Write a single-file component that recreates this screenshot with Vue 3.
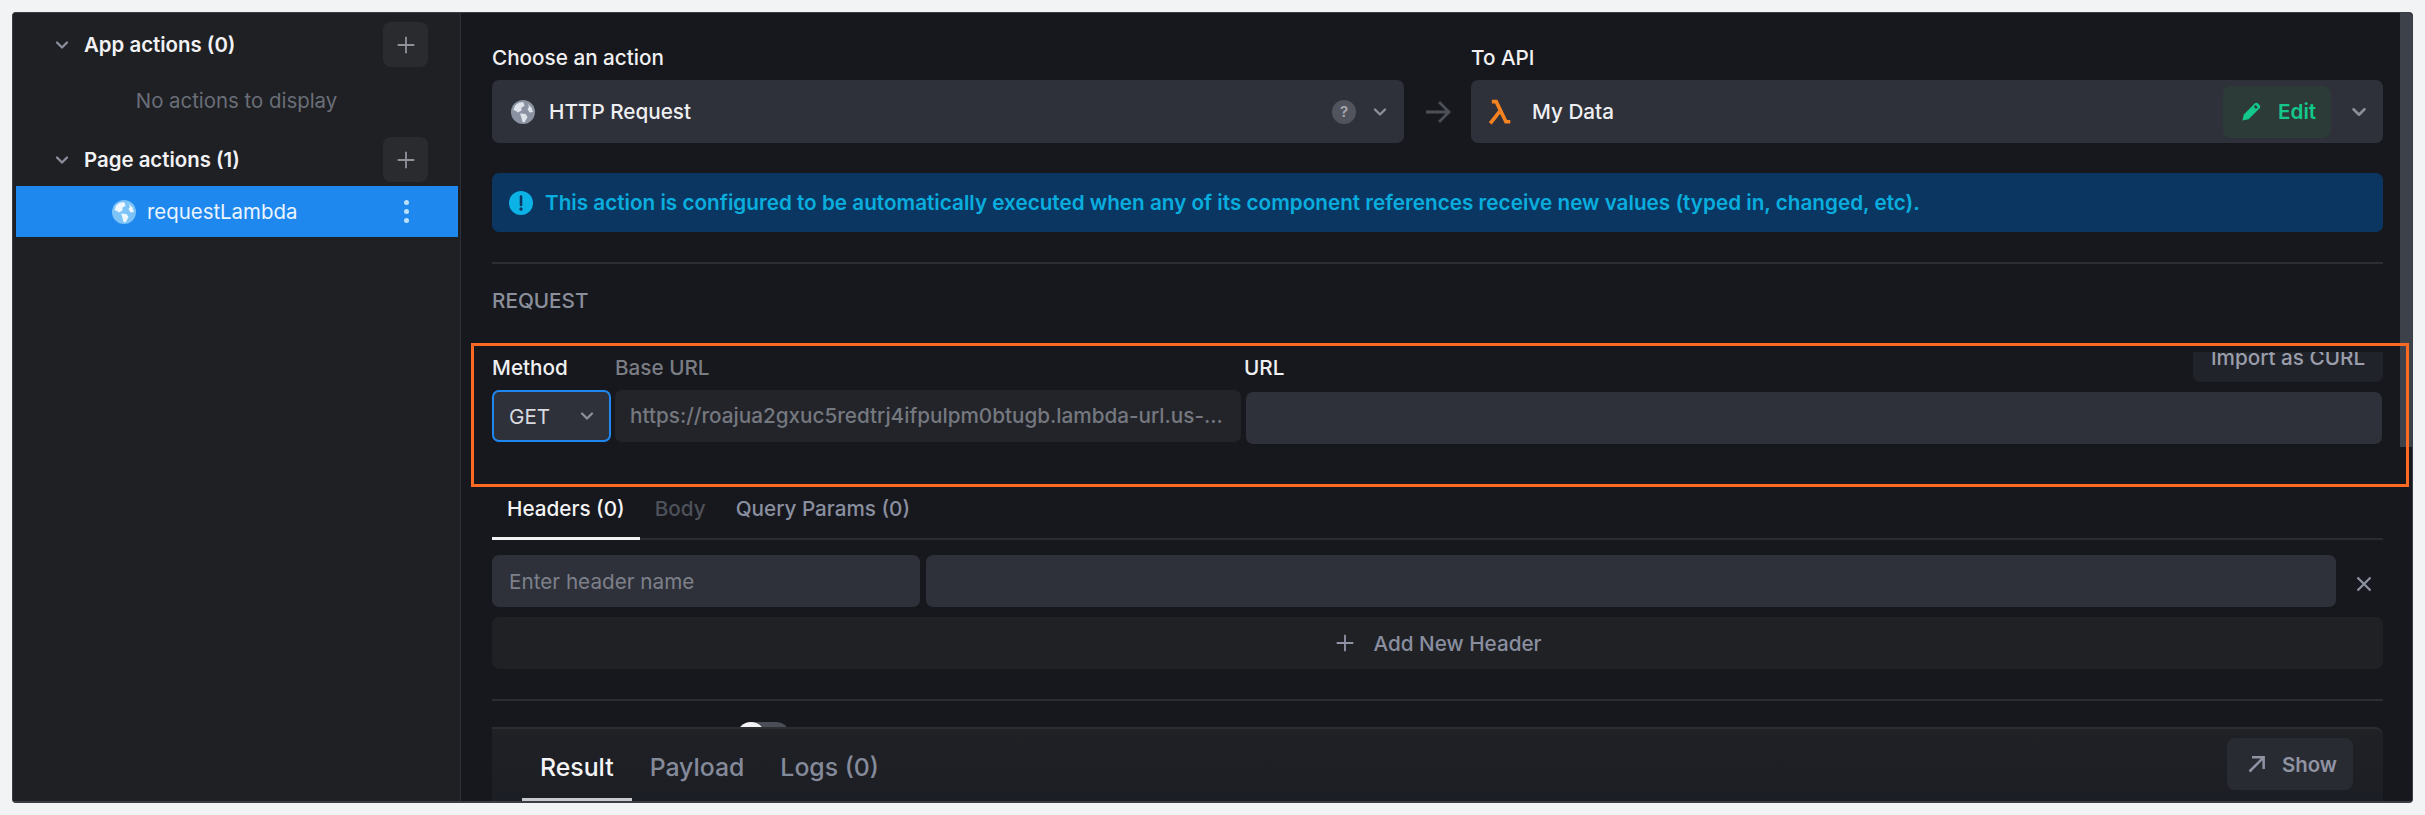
<script setup>
const globeLand = [
  'M4 5.5C7 2.5 10 1.5 12.5 2.5L13.5 6L10.5 7.5L10.5 10.5L7 12.5L5 11L2.5 10Z',
  'M9 13.5L14.5 14L16.5 17L13.5 22.5L11.5 22L10.5 18Z',
  'M17 4L20.5 7.5L22 12L18.5 12.5L16.5 9L18 7Z'
]
const sections = [
  { title: 'App actions (0)', empty: true },
  { title: 'Page actions (1)', empty: false }
]
const requestTabs = [
  { label: 'Headers (0)', state: 'active' },
  { label: 'Body', state: 'disabled' },
  { label: 'Query Params (0)', state: '' }
]
const resultTabs = ['Result', 'Payload', 'Logs (0)']
</script>

<template>
  <div class="frame">
    <aside class="sidebar">
      <section v-for="s in sections" :key="s.title" class="group">
        <header class="group-head">
          <svg class="chev side-chev" viewBox="0 0 24 24"><path d="M6 9l6 6 6-6" /></svg>
          <span class="group-title">{{ s.title }}</span>
          <button class="add-btn">
            <svg viewBox="0 0 24 24" class="plus"><path d="M12 2v20M2 12h20" /></svg>
          </button>
        </header>
        <p v-if="s.empty" class="empty">No actions to display</p>
        <div v-else class="action-row">
          <svg class="globe" viewBox="0 0 24 24">
            <circle cx="12" cy="12" r="12" fill="#7cc3f8" />
            <path v-for="d in globeLand" :key="d" :d="d" fill="#eef7ff" />
          </svg>
          <span class="action-name">requestLambda</span>
          <span class="dots"><i></i><i></i><i></i></span>
        </div>
      </section>
    </aside>

    <main class="main">
      <div class="top-row">
        <div class="pick">
          <label class="label">Choose an action</label>
          <div class="select">
            <svg class="globe" viewBox="0 0 24 24">
              <circle cx="12" cy="12" r="12" fill="#8b93a3" />
              <path v-for="d in globeLand" :key="d" :d="d" fill="#dfe3ea" />
            </svg>
            <span class="select-text">HTTP Request</span>
            <span class="help">?</span>
            <svg class="chev select-chev" viewBox="0 0 24 24"><path d="M6 9l6 6 6-6" /></svg>
          </div>
        </div>
        <div class="arrow-cell">
          <svg viewBox="0 0 26 26" class="arrow"><path d="M1 13h23M14 3l10 10-10 10" /></svg>
        </div>
        <div class="pick">
          <label class="label">To API</label>
          <div class="select">
            <svg class="lambda" viewBox="0 0 24 24">
              <path d="M4.5 2.5h4L17.5 21h4M12.5 10.5L3 22.5" />
            </svg>
            <span class="select-text data">My Data</span>
            <button class="edit">
              <svg viewBox="0 0 24 24" class="pencil">
                <path d="M2.5 21.5L4 15 15.5 3.5a2.2 2.2 0 0 1 3 0l2 2a2.2 2.2 0 0 1 0 3L9 20z" />
                <rect x="15" y="6" width="3" height="2.6" transform="rotate(45 16.5 7.3)" fill="#2c3a38" />
              </svg>
              Edit
            </button>
            <svg class="chev edit-chev" viewBox="0 0 24 24"><path d="M6 9l6 6 6-6" /></svg>
          </div>
        </div>
      </div>

      <div class="banner">
        <svg viewBox="0 0 24 24" class="info">
          <circle cx="12" cy="12" r="12" fill="#0bb2e6" />
          <path d="M12 5.5v8.5" stroke="#0b3662" stroke-width="2.6" stroke-linecap="round" />
          <circle cx="12" cy="18" r="1.7" fill="#0b3662" />
        </svg>
        This action is configured to be automatically executed when any of its component references receive new values (typed in, changed, etc).
      </div>

      <hr class="rule" />
      <h3 class="section-title">REQUEST</h3>

      <div class="form">
        <div class="col-method">
          <label class="label">Method</label>
          <div class="method">
            <span>GET</span>
            <svg class="chev method-chev" viewBox="0 0 24 24"><path d="M6 9l6 6 6-6" /></svg>
          </div>
        </div>
        <div class="col-base">
          <label class="label muted">Base URL</label>
          <div class="base">https://roajua2gxuc5redtrj4ifpulpm0btugb.lambda-url.us-...</div>
        </div>
        <div class="col-url">
          <label class="label url-label">URL</label>
          <div class="url"></div>
        </div>
      </div>
      <div class="import-clip"><button class="import">Import as CURL</button></div>

      <nav class="tabs">
        <span v-for="t in requestTabs" :key="t.label" class="tab" :class="t.state">{{ t.label }}</span>
      </nav>

      <div class="kv">
        <div class="field name">Enter header name</div>
        <div class="field value"></div>
        <svg class="close" viewBox="0 0 16 16"><path d="M1.5 1.5l13 13M14.5 1.5l-13 13" /></svg>
      </div>
      <button class="add-header">
        <svg viewBox="0 0 24 24" class="plus small"><path d="M12 2v20M2 12h20" /></svg>
        Add New Header
      </button>
      <hr class="rule last" />
      <div class="toggle"><i></i></div>

      <div class="scrollbar"></div>
      <div class="orange-box"></div>

      <footer class="result">
        <span v-for="(t, i) in resultTabs" :key="t" class="result-tab" :class="{ on: i === 0 }">{{ t }}</span>
        <button class="show">
          <svg viewBox="0 0 24 24" class="up-arrow"><path d="M3 21L20 4M6 4h14v14" /></svg>
          Show
        </button>
      </footer>
    </main>
  </div>
</template>

<style>
html, body { margin: 0; background: #f2f3f5; }
</style>

<style scoped>
* { box-sizing: border-box; }
.frame {
  margin: 12px;
  width: 2401px;
  height: 791px;
  display: flex;
  overflow: hidden;
  border: 1px solid #3a3d45;
  border-bottom-width: 2px;
  border-radius: 4px;
  font-family: Inter, "Liberation Sans", sans-serif;
  font-size: 20.7px;
  background: #17181d;
}
button { font-family: inherit; border: 0; }

/* sidebar */
.sidebar {
  width: 448px;
  flex: none;
  padding-top: 9px;
  background: #1f2024;
  border-right: 1px solid #2e3138;
  font-size: 20.4px;
}
.group-head {
  display: flex;
  align-items: center;
  height: 45px;
  padding: 0 32px 0 39px;
}
.side-chev { width: 20px; height: 20px; margin-right: 12px; }
.group-title { font-weight: 600; color: #f2f2f4; flex: 1; }
.add-btn {
  width: 45px;
  height: 45px;
  border-radius: 8px;
  background: #2a2b2f;
  display: flex;
  align-items: center;
  justify-content: center;
  padding: 0;
}
.plus { width: 20px; height: 20px; fill: none; stroke: #8f929b; stroke-width: 2.2; }
.plus.small { stroke: #8f93a3; }
.empty {
  margin: 0;
  height: 70px;
  line-height: 68px;
  text-align: center;
  color: #6a6e78;
}
.action-row {
  display: flex;
  align-items: center;
  height: 51px;
  margin: 4px 2px 0 3px;
  padding: 0 49px 0 96px;
  background: #1e88ee;
}
.globe { width: 24px; height: 24px; flex: none; }
.action-name { margin-left: 11px; color: #eaf4ff; flex: 1; }
.dots { display: flex; flex-direction: column; gap: 3.5px; }
.dots i { width: 5.5px; height: 5.5px; border-radius: 50%; background: #bcdffb; }

.chev { fill: none; stroke: #8a8f9b; stroke-width: 2.8; stroke-linecap: round; stroke-linejoin: round; }

/* main */
.main {
  flex: 1;
  position: relative;
  padding: 33px 29px 0 31px;
  min-width: 0;
  background: #17181d;
}
.top-row { display: flex; }
.pick { flex: 1; min-width: 0; }
.label {
  display: block;
  height: 24px;
  line-height: 24px;
  font-weight: 500;
  color: #f0f0f2;
  white-space: nowrap;
}
.label.muted { color: #7b7d84; }
.url-label { margin-left: -2px; }
.select {
  margin-top: 10px;
  height: 63px;
  background: #2e3139;
  border-radius: 7px;
  display: flex;
  align-items: center;
  padding-left: 19px;
}
.select-text { margin-left: 14px; font-weight: 500; color: #eeeff2; flex: 1; }
.select-text.data { margin-left: 19px; }
.help {
  width: 24px;
  height: 24px;
  border-radius: 50%;
  background: #51545d;
  color: #a8abb3;
  font-size: 15px;
  font-weight: 600;
  text-align: center;
  line-height: 24px;
}
.select-chev { width: 20px; height: 20px; margin: 0 14px 0 14px; }
.arrow-cell { width: 67px; flex: none; display: flex; align-items: center; justify-content: center; padding-top: 34px; }
.arrow { width: 26px; height: 26px; fill: none; stroke: #4c4f58; stroke-width: 2.8; }
.lambda { width: 26px; height: 26px; flex: none; fill: none; stroke: #f58220; stroke-width: 3.4; margin-left: -3px; }
.edit {
  width: 108px;
  height: 52px;
  border-radius: 8px;
  background: #2c3a38;
  color: #14c78a;
  font-size: 20.7px;
  font-weight: 600;
  display: flex;
  align-items: center;
  padding: 0 0 0 17px;
  gap: 15px;
}
.pencil { width: 23px; height: 23px; fill: #14c78a; flex: none; }
.edit-chev { width: 22px; height: 22px; margin: 0 13px 0 17px; }

.banner {
  margin-top: 30px;
  height: 59px;
  background: #0b3662;
  border-radius: 7px;
  display: flex;
  align-items: center;
  padding-left: 17px;
  gap: 12px;
  color: #09aede;
  font-weight: 600;
  white-space: nowrap;
}
.info { width: 24px; height: 24px; flex: none; }
.rule { margin: 30px 0 0; border: 0; height: 2px; background: #2c2e33; }
.section-title {
  margin: 25px 0 0;
  height: 24px;
  line-height: 24px;
  font-size: 20.7px;
  font-weight: 500;
  color: #8a8f9b;
}

.form { margin-top: 43px; display: flex; }
.col-method { width: 119px; flex: none; }
.col-base { width: 626px; flex: none; margin-left: 4px; }
.col-url { flex: 1; margin-left: 5px; min-width: 0; }
.method, .base, .url { margin-top: 10px; height: 52px; border-radius: 7px; }
.method {
  border: 2px solid #1e88ee;
  background: #2e3139;
  display: flex;
  align-items: center;
  justify-content: space-between;
  padding: 0 12px 0 15px;
  color: #d8dae0;
}
.method-chev { width: 20px; height: 20px; }
.base {
  background: #22242a;
  color: #75787f;
  font-weight: 500;
  line-height: 52px;
  padding-left: 15px;
  white-space: nowrap;
  overflow: hidden;
}
.url { background: #2e3139; margin-top: 12px; margin-right: 1px; }
.import-clip {
  position: absolute;
  left: 1732px;
  top: 339px;
  width: 190px;
  height: 30px;
  overflow: hidden;
}
.import {
  position: absolute;
  left: 0;
  bottom: 0;
  width: 190px;
  height: 52px;
  background: #21232a;
  border-radius: 7px;
  color: #9a9eaa;
  font-size: 20.7px;
  font-weight: 500;
  padding: 2px 0 0;
  white-space: nowrap;
  line-height: 52px;
}

.tabs {
  margin-top: 46px;
  height: 50px;
  display: flex;
  border-bottom: 2px solid #2a2c31;
}
.tab {
  height: 50px;
  padding: 7px 15px 0;
  line-height: 24px;
  font-weight: 500;
  color: #8a8fa0;
  white-space: nowrap;
}
.tab.active { color: #f4f4f6; border-bottom: 3px solid #f2f2f4; }
.tab.disabled { color: #4e515a; }

.kv { margin-top: 15px; display: flex; align-items: center; gap: 6px; }
.field {
  height: 52px;
  border-radius: 7px;
  background: #2e3139;
}
.field.name { width: 428px; flex: none; padding-left: 17px; line-height: 54px; color: #7d808a; }
.field.value { width: 1410px; flex: none; }
.close { width: 16px; height: 16px; margin: 6px 0 0 14px; fill: none; stroke: #8f93a3; stroke-width: 2.2; flex: none; }
.add-header {
  margin-top: 10px;
  width: 100%;
  height: 52px;
  background: #202125;
  border-radius: 7px;
  color: #8a8fa0;
  font-size: 20.7px;
  font-weight: 500;
  display: flex;
  align-items: center;
  justify-content: center;
  gap: 18px;
  padding: 0 0 0 2px;
}
.rule.last { margin-top: 30px; }
.toggle {
  margin: 21px 0 0 245px;
  width: 53px;
  height: 28px;
  border-radius: 14px;
  background: #4b4e57;
}
.toggle i { display: block; width: 28px; height: 28px; border-radius: 50%; background: #f4f4f6; }

.orange-box {
  position: absolute;
  left: 10px;
  top: 330px;
  width: 1938px;
  height: 144px;
  border: 3px solid #fb6a22;
  pointer-events: none;
}
.scrollbar {
  position: absolute;
  right: 0;
  top: 0;
  width: 12px;
  height: 434px;
  background: #3d4149;
}
.result {
  position: absolute;
  left: 31px;
  right: 29px;
  bottom: 0;
  height: 74px;
  background: linear-gradient(#202125, #1c1e25);
  border-top: 2px solid #2c2e33;
  border-top-right-radius: 8px;
  display: flex;
  padding-left: 30px;
}
.result-tab {
  height: 72px;
  padding: 0 18px;
  line-height: 76px;
  font-size: 24.8px;
  font-weight: 500;
  color: #858a9a;
}
.result-tab.on { color: #f4f4f6; border-bottom: 3px solid #c8c9cd; }
.show {
  margin-left: auto;
  margin-right: 30px;
  margin-top: 9px;
  width: 126px;
  height: 52px;
  background: #292b32;
  border-radius: 8px;
  color: #8f93a3;
  font-size: 20.4px;
  font-weight: 600;
  display: flex;
  align-items: center;
  padding: 0 0 0 20px;
  gap: 15px;
}
.up-arrow { width: 20px; height: 20px; fill: none; stroke: #8f93a3; stroke-width: 3; flex: none; }
</style>
